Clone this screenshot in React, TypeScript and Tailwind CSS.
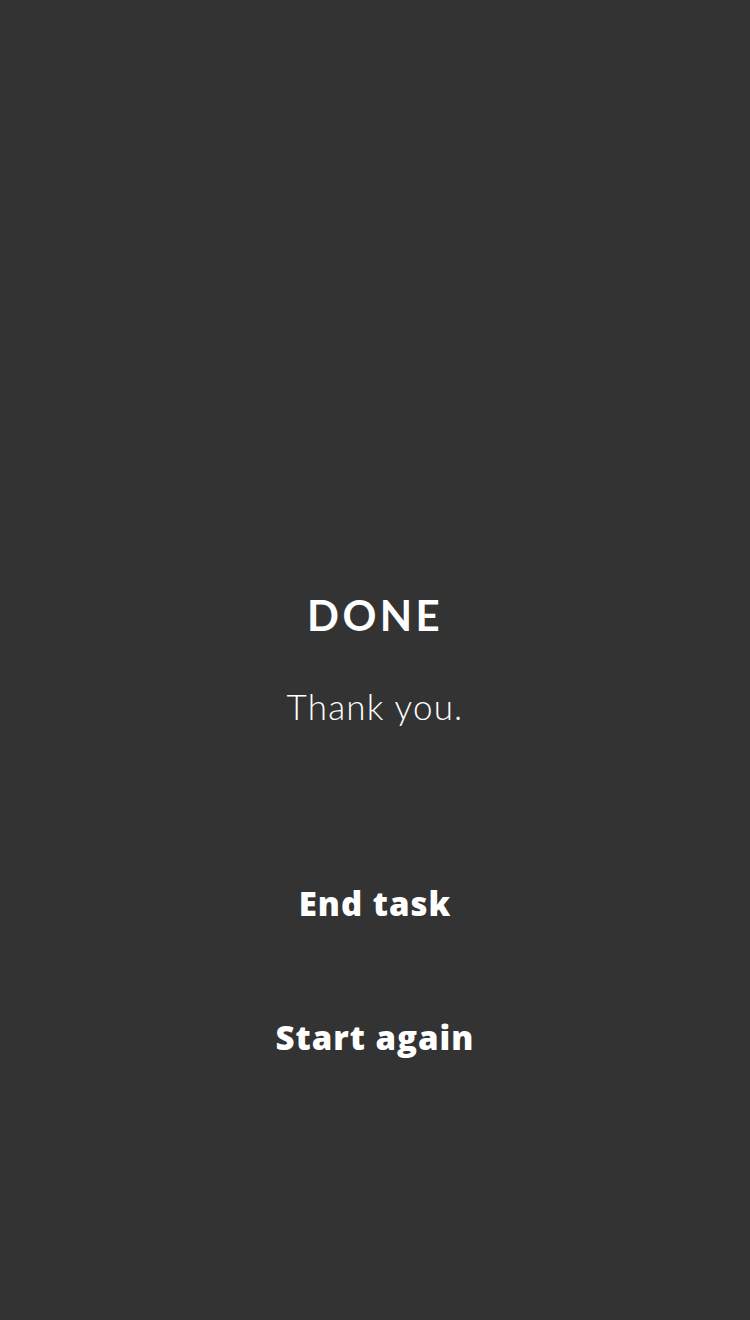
export default function App() {
  return (
    <div className="min-h-[1320px] w-full bg-[#333333] text-white flex flex-col items-center font-['Lato','Open_Sans',sans-serif]">
      <h1 className="mt-[590px] text-[42px] leading-[50px] font-bold tracking-[0.08em]">DONE</h1>
      <p className="mt-[44px] text-[35px] leading-[44px] font-light tracking-[0.035em]">Thank you.</p>
      <button className="mt-[154px] text-[33px] leading-[44px] font-extrabold tracking-[0.03em] font-['Open_Sans',sans-serif]">
        End task
      </button>
      <button className="mt-[90px] text-[33px] leading-[44px] font-extrabold tracking-[0.03em] font-['Open_Sans',sans-serif]">
        Start again
      </button>
    </div>
  );
}
